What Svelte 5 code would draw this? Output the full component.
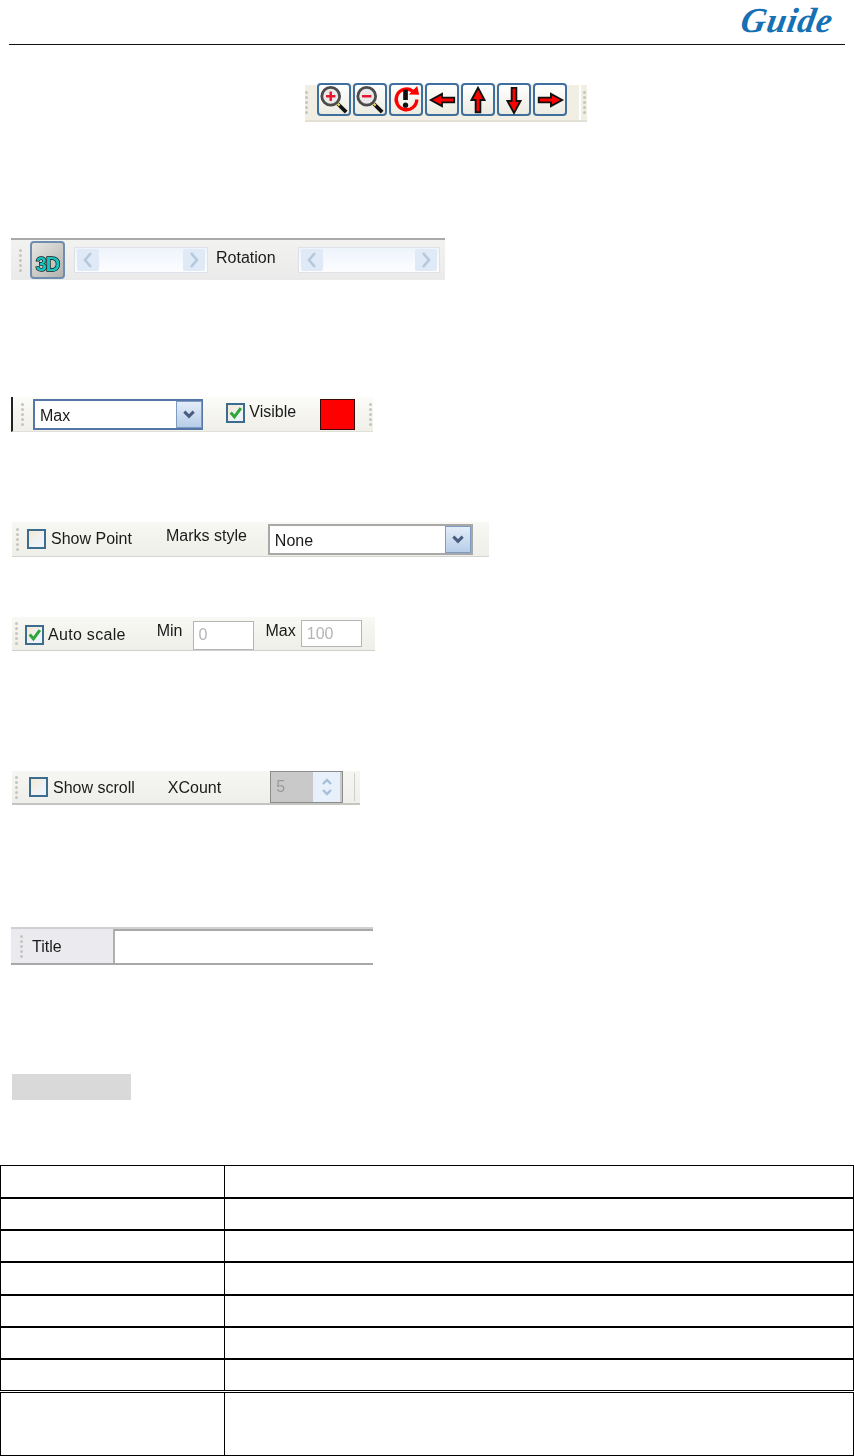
<script>
  const tools = ['in', 'out', 'reset', 'left', 'up', 'down', 'right'];
  const rows = [0, 1, 2, 3, 4, 5, 6];
</script>

{#snippet grip()}
  <span class="grip"><i></i><i></i><i></i><i></i><i></i></span>
{/snippet}

{#snippet chevron(dir)}
  <svg class="chev" viewBox="0 0 12 12" width="12" height="12">
    {#if dir === 'up'}
      <path d="M2 8 L6 4 L10 8" />
    {:else}
      <path d="M2 4 L6 8 L10 4" />
    {/if}
  </svg>
{/snippet}

{#snippet scrollbar(cls)}
  <div class="scroll {cls}">
    <span class="sbtn">
      <svg class="big" viewBox="0 0 12 18" width="12" height="18"><path d="M9 2 L3 9 L9 16" /></svg>
    </span>
    <span class="sbtn">
      <svg class="big" viewBox="0 0 12 18" width="12" height="18"><path d="M3 2 L9 9 L3 16" /></svg>
    </span>
  </div>
{/snippet}

{#snippet check(on)}
  <span class="box" class:on>
    {#if on}
      <svg viewBox="0 0 14 14" width="15" height="15"><path d="M2.5 7 L6 11 L12 3" fill="none" stroke="#2fa53a" stroke-width="2.8" /></svg>
    {/if}
  </span>
{/snippet}

{#snippet combo(cls, text)}
  <div class="combo {cls}">
    <span class="ctext">{text}</span>
    <span class="drop"><svg viewBox="0 0 12 12" width="14" height="14"><path d="M2 4 L6 8 L10 4" fill="none" stroke="#4a5c80" stroke-width="2.6" /></svg></span>
  </div>
{/snippet}

<div class="page">
  <header>
    <span class="logo">Guide</span>
  </header>

  <div class="bar t1">
    {@render grip()}
    <div class="tools">
      {#each tools as t}
        <button class="tool">
          <svg viewBox="0 0 32 32" width="32" height="32">
            {#if t === 'in' || t === 'out'}
              <path d="M20 20 L29 29" stroke="#111" stroke-width="4" />
              <path d="M19 19 L22 22" stroke="#e6dc50" stroke-width="2.4" />
              <circle cx="12.5" cy="12" r="9.5" fill="#e9e9e9" stroke="#4c4c4c" stroke-width="3" />
              <path d="M7.5 12 H17.5" stroke="#e8132a" stroke-width="2.6" />
              {#if t === 'in'}
                <path d="M12.5 7 V17" stroke="#e8132a" stroke-width="2.6" />
              {/if}
            {:else if t === 'reset'}
              <path d="M23 6.5 A11 11 0 1 0 27.5 15.5" fill="none" stroke="#f00" stroke-width="3.6" />
              <path d="M19 10 L30 10.5 L28 1 Z" fill="#f00" />
              <path d="M15.5 5 V16" stroke="#111" stroke-width="5" />
              <circle cx="15.5" cy="21.5" r="2.8" fill="#111" />
            {:else if t === 'left'}
              <path d="M4 16 L16 9.5 V13.5 H29 V18.5 H16 V22.5 Z" fill="#f00" stroke="#111" stroke-width="2" />
            {:else if t === 'up'}
              <path d="M16 3 L23 16 H18.5 V29 H13.5 V16 H9 Z" fill="#f00" stroke="#111" stroke-width="2" />
            {:else if t === 'down'}
              <path d="M16 30 L23 17 H18.5 V3 H13.5 V17 H9 Z" fill="#f00" stroke="#111" stroke-width="2" />
            {:else}
              <path d="M29 16 L17 9.5 V13.5 H4 V18.5 H17 V22.5 Z" fill="#f00" stroke="#111" stroke-width="2" />
            {/if}
          </svg>
        </button>
      {/each}
    </div>
    <span class="end">{@render grip()}</span>
  </div>

  <div class="bar t2">
    {@render grip()}
    <button class="three">3D</button>
    {@render scrollbar('s1')}
    <span class="label rot">Rotation</span>
    {@render scrollbar('s2')}
  </div>

  <div class="bar t3">
    {@render grip()}
    {@render combo('c1', 'Max')}
    {@render check(true)}
    <span class="label vis">Visible</span>
    <span class="swatch"></span>
    <span class="tail">{@render grip()}</span>
  </div>

  <div class="bar t4">
    {@render grip()}
    {@render check(false)}
    <span class="label lb">Show Point</span>
    <span class="label marks">Marks style</span>
    {@render combo('c2', 'None')}
  </div>

  <div class="bar t5">
    {@render grip()}
    {@render check(true)}
    <span class="label lb">Auto scale</span>
    <span class="label min">Min</span>
    <span class="field f1">0</span>
    <span class="label max">Max</span>
    <span class="field f2">100</span>
  </div>

  <div class="bar t6">
    {@render grip()}
    {@render check(false)}
    <span class="label lb">Show scroll</span>
    <span class="label xc">XCount</span>
    <div class="spin">
      <span>5</span>
      <span class="arrows">{@render chevron('up')}{@render chevron('down')}</span>
    </div>
    <span class="sep"></span>
  </div>

  <div class="bar t7">
    {@render grip()}
    <span class="label ttl">Title</span>
    <span class="title-input"></span>
  </div>

  <div class="shade"></div>

  <div class="grid">
    {#each rows as r}
      <div class="row"><div class="cell"></div><div></div></div>
    {/each}
  </div>
  <div class="grid last">
    <div class="row"><div class="cell"></div><div></div></div>
  </div>
</div>

<style>
  :global(body) {
    margin: 0;
    background: #fff;
  }

  .page {
    width: 854px;
    height: 1456px;
    overflow: hidden;
    font-family: "Liberation Sans", Arial, sans-serif;
    color: #1a1a1a;
  }

  header {
    height: 44px;
    margin: 0 9px;
    border-bottom: 1px solid #111;
    display: flex;
    justify-content: flex-end;
  }

  .logo {
    font-family: "Liberation Serif", serif;
    font-style: italic;
    font-weight: 700;
    font-size: 35px;
    letter-spacing: 0.8px;
    line-height: 41px;
    color: #1670b4;
    margin-right: 13px;
    transform: skewX(-10deg);
  }

  .bar {
    display: flex;
    align-items: center;
    box-sizing: border-box;
    background: #f1f0ea;
    font-size: 16px;
    filter: blur(0.5px);
  }

  .grip {
    display: flex;
    flex-direction: column;
    gap: 2px;
    width: 4px;
    flex: none;
  }

  .grip i {
    display: block;
    width: 3px;
    height: 3px;
    background: #c6c5bc;
    border-radius: 50%;
  }

  .label {
    white-space: nowrap;
    line-height: 18px;
  }

  .t1 {
    width: 282px;
    height: 37px;
    margin: 40px 0 0 305px;
    background: #f1efe4;
    border-bottom: 2px solid #e2e0d4;
  }

  .tools {
    display: flex;
    gap: 2px;
    margin-left: 8px;
    margin-top: -6px;
  }

  .tool {
    width: 34px;
    height: 33px;
    padding: 0;
    border: 2px solid #3f6f9f;
    border-radius: 4px;
    background: linear-gradient(#fff, #ecebe1);
    display: flex;
    align-items: center;
    justify-content: center;
  }

  .end {
    margin-left: 12px;
    padding-left: 2px;
    border-left: 2px solid #fff;
    height: 100%;
    display: flex;
    align-items: center;
  }

  .t2 {
    width: 434px;
    height: 42px;
    margin: 116px 0 0 11px;
    padding-left: 8px;
    border-top: 2px solid #a9a9a9;
    background: linear-gradient(#f2f2f0, #ebeaea);
  }

  .three {
    width: 35px;
    height: 38px;
    margin-left: 7px;
    padding: 8px 0 0;
    border: 2px solid #6e8db0;
    border-radius: 4px;
    background: linear-gradient(135deg, #e8e6e2, #b4b2ae);
    font-family: "Liberation Sans", sans-serif;
    font-weight: 700;
    font-size: 20px;
    letter-spacing: -1px;
    color: #18c4c0;
    -webkit-text-stroke: 1.4px #0a1818;
    paint-order: stroke fill;
  }

  .scroll {
    height: 26px;
    box-sizing: border-box;
    display: flex;
    align-items: center;
    justify-content: space-between;
    padding: 0 2px;
    background: linear-gradient(#eef4fc, #fdfdff);
    border: 1px solid #dde2e8;
  }

  .s1 {
    width: 134px;
    margin-left: 9px;
  }

  .s2 {
    width: 142px;
    margin-left: 22px;
  }

  .sbtn {
    width: 22px;
    height: 22px;
    display: flex;
    align-items: center;
    justify-content: center;
    background: #dfeaf6;
    border-radius: 2px;
  }

  .big path {
    fill: none;
    stroke: #b4c8de;
    stroke-width: 2.6;
  }

  .chev path {
    fill: none;
    stroke: #a6bfda;
    stroke-width: 2.4;
  }

  .rot {
    margin-left: 8px;
    transform: translateY(-2px);
  }

  .t3 {
    width: 362px;
    height: 35px;
    margin: 117px 0 0 11px;
    padding-left: 8px;
    border-left: 2px solid #222;
    background: linear-gradient(#fbfbf8, #f0efe8);
    border-bottom: 1px solid #e0e0d8;
  }

  .combo {
    box-sizing: border-box;
    display: flex;
    align-items: center;
    justify-content: space-between;
    background: #fff;
    padding-left: 5px;
    font-size: 16px;
  }

  .ctext {
    padding-top: 3px;
  }

  .c1 {
    width: 171px;
    height: 31px;
    margin-left: 8px;
    border: 2px solid #5577a8;
    border-right-width: 1px;
  }

  .c2 {
    width: 205px;
    height: 31px;
    margin-left: 21px;
    border: 2px solid #a8a8a8;
  }

  .drop {
    width: 26px;
    height: 100%;
    display: flex;
    align-items: center;
    justify-content: center;
    background: linear-gradient(#e4edf8, #b7cde8);
    box-sizing: border-box;
    border: 1px solid #7e9cc2;
    flex: none;
  }

  .box {
    width: 19px;
    height: 20px;
    box-sizing: border-box;
    border: 2px solid #3d6d8e;
    background: linear-gradient(135deg, #f4e9d2, #eef3fa 70%);
    display: flex;
    align-items: center;
    justify-content: center;
    flex: none;
  }

  .box svg {
    margin: -1px;
  }

  .t3 .box {
    margin-left: 23px;
    margin-top: -3px;
  }

  .vis {
    margin-left: 4px;
    transform: translateY(-2px);
  }

  .swatch {
    width: 35px;
    height: 31px;
    box-sizing: border-box;
    margin-left: 24px;
    background: #fe0000;
    border: 1px solid #3a0a0a;
  }

  .tail {
    margin-left: 14px;
  }

  .t4 {
    width: 477px;
    height: 35px;
    margin: 90px 0 0 12px;
    padding-left: 2px;
    border-bottom: 1px solid #d4d4d0;
    background: linear-gradient(#f7f7f3, #efefe9);
  }

  .t4 .box {
    margin-left: 7px;
  }

  .t4 .grip,
  .t5 .grip,
  .t6 .grip {
    margin-left: 2px;
  }

  .lb {
    margin-left: 5px;
  }

  .marks {
    margin-left: 34px;
    transform: translateY(-3px);
  }

  .t5 {
    width: 363px;
    height: 34px;
    margin: 60px 0 0 12px;
    padding-left: 1px;
    border-bottom: 1px solid #cfcfcb;
    background: linear-gradient(#f8f8f4, #efefe9);
  }

  .t5 .box {
    margin-left: 6px;
    margin-top: 2px;
  }

  .t5 .lb {
    margin-left: 4px;
    margin-top: 2px;
    letter-spacing: 0.3px;
  }

  .lb + .min {
    margin-left: 31px;
    transform: translateY(-3px);
  }

  .field {
    box-sizing: border-box;
    background: #fff;
    border: 1px solid #b5b5b5;
    color: #b5b5b5;
    padding-left: 5px;
    line-height: 26px;
    flex: none;
  }

  .f1 {
    width: 61px;
    height: 29px;
    margin-left: 10px;
    margin-top: 3px;
  }

  .max {
    margin-left: 12px;
    transform: translateY(-3px);
  }

  .f2 {
    width: 61px;
    height: 27px;
    margin-left: 5px;
    margin-top: -1px;
  }

  .t6 {
    width: 348px;
    height: 34px;
    margin: 120px 0 0 12px;
    padding-left: 1px;
    border-bottom: 2px solid #c4c4c0;
    background: linear-gradient(#f6f6f2, #eeeeea);
  }

  .t6 .box {
    margin-left: 10px;
  }

  .t6 .label {
    margin-top: 2px;
  }

  .xc {
    margin-left: 33px;
  }

  .spin {
    width: 73px;
    height: 32px;
    box-sizing: border-box;
    margin-left: 49px;
    border: 1px solid #8c8c8c;
    background: #c9c9c9;
    color: #9a9a9a;
    display: flex;
    align-items: center;
    justify-content: space-between;
    padding-left: 5px;
  }

  .arrows {
    width: 27px;
    height: 100%;
    display: flex;
    flex-direction: column;
    align-items: center;
    justify-content: center;
    background: #e7f0fb;
    margin-right: 2px;
  }

  .arrows :global(svg) {
    margin: -1px 0;
  }

  .sep {
    width: 1px;
    height: 28px;
    margin-left: 11px;
    background: #cfcfca;
  }

  .t7 {
    width: 362px;
    height: 38px;
    margin: 122px 0 0 11px;
    padding-left: 9px;
    background: #ebebef;
    border-top: 2px solid #d0d0d0;
    border-bottom: 2px solid #a8a8a8;
  }

  .ttl {
    margin-left: 8px;
    margin-top: 2px;
    width: 81px;
  }

  .title-input {
    flex: 1;
    height: 100%;
    box-sizing: border-box;
    background: #fff;
    border-left: 2px solid #b0b0b0;
    border-top: 2px solid #a8a8a8;
  }

  .shade {
    width: 119px;
    height: 26px;
    margin: 109px 0 0 12px;
    background: #d9d9d9;
  }

  .grid {
    margin-top: 65px;
    border-top: 1px solid #000;
    border-left: 1px solid #000;
    border-right: 1px solid #000;
  }

  .row {
    height: 32px;
    box-sizing: border-box;
    border-bottom: 2px solid #000;
    display: flex;
  }

  .row:nth-child(1),
  .row:nth-child(4) {
    height: 33px;
  }

  .row:nth-child(7) {
    height: 31px;
    border-bottom-width: 1px;
  }

  .cell {
    width: 224px;
    box-sizing: border-box;
    border-right: 1px solid #000;
  }

  .grid.last {
    margin-top: 1px;
    border: 1px solid #000;
    box-sizing: border-box;
    height: 64px;
  }

  .last .row {
    height: 100%;
    border-bottom: 0;
  }
</style>
